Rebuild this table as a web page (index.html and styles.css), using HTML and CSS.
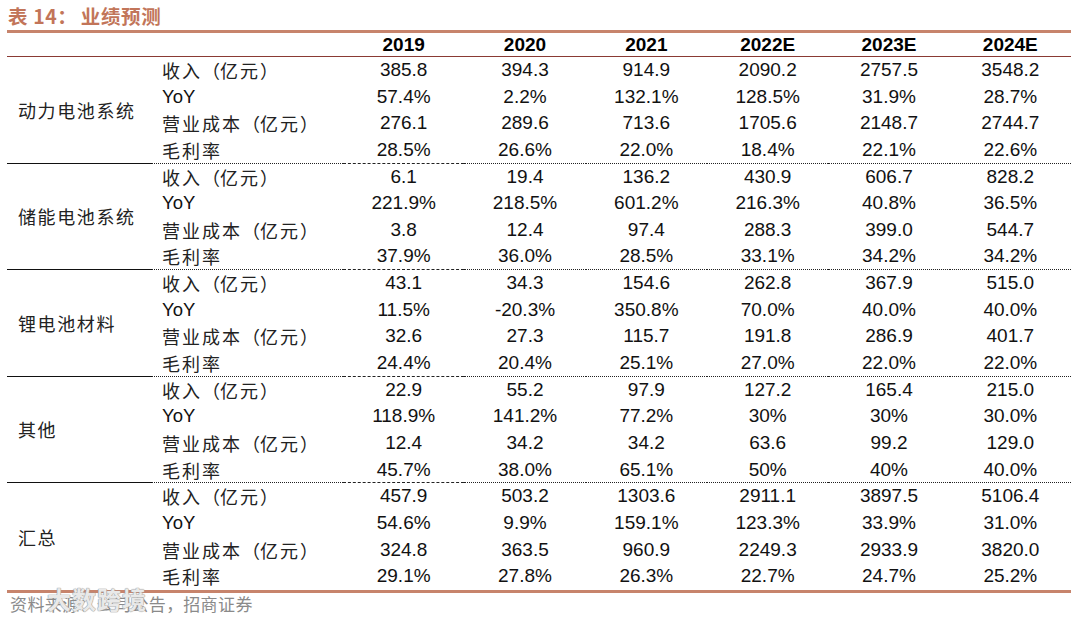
FILE: index.html
```html
<!DOCTYPE html>
<html lang="zh-CN">
<head>
<meta charset="utf-8">
<title>业绩预测</title>
<link rel="stylesheet" href="styles.css">
</head>
<body>
<div class="page">
  <div class="title">表 14<span class="pc">：</span><span class="gap"></span>业绩预测</div>
  <div class="row head">
    <div class="c"></div><div class="c"></div>
    <div class="c">2019</div><div class="c">2020</div><div class="c">2021</div>
    <div class="c">2022E</div><div class="c">2023E</div><div class="c">2024E</div>
  </div>

  <div class="group">
    <div class="gname">动力电池系统</div>
    <div class="lbl">收入<span class="po">（</span>亿元<span class="pc">）</span></div><div class="n">385.8</div><div class="n">394.3</div><div class="n">914.9</div><div class="n">2090.2</div><div class="n">2757.5</div><div class="n">3548.2</div>
    <div class="lbl en">YoY</div><div class="n">57.4%</div><div class="n">2.2%</div><div class="n">132.1%</div><div class="n">128.5%</div><div class="n">31.9%</div><div class="n">28.7%</div>
    <div class="lbl">营业成本<span class="po">（</span>亿元<span class="pc">）</span></div><div class="n">276.1</div><div class="n">289.6</div><div class="n">713.6</div><div class="n">1705.6</div><div class="n">2148.7</div><div class="n">2744.7</div>
    <div class="lbl last">毛利率</div><div class="n last s">28.5%</div><div class="n last">26.6%</div><div class="n last">22.0%</div><div class="n last">18.4%</div><div class="n last">22.1%</div><div class="n last">22.6%</div>
  </div>

  <div class="group">
    <div class="gname">储能电池系统</div>
    <div class="lbl">收入<span class="po">（</span>亿元<span class="pc">）</span></div><div class="n">6.1</div><div class="n">19.4</div><div class="n">136.2</div><div class="n">430.9</div><div class="n">606.7</div><div class="n">828.2</div>
    <div class="lbl en">YoY</div><div class="n">221.9%</div><div class="n">218.5%</div><div class="n">601.2%</div><div class="n">216.3%</div><div class="n">40.8%</div><div class="n">36.5%</div>
    <div class="lbl">营业成本<span class="po">（</span>亿元<span class="pc">）</span></div><div class="n">3.8</div><div class="n">12.4</div><div class="n">97.4</div><div class="n">288.3</div><div class="n">399.0</div><div class="n">544.7</div>
    <div class="lbl last">毛利率</div><div class="n last s">37.9%</div><div class="n last">36.0%</div><div class="n last">28.5%</div><div class="n last">33.1%</div><div class="n last">34.2%</div><div class="n last">34.2%</div>
  </div>

  <div class="group">
    <div class="gname">锂电池材料</div>
    <div class="lbl">收入<span class="po">（</span>亿元<span class="pc">）</span></div><div class="n">43.1</div><div class="n">34.3</div><div class="n">154.6</div><div class="n">262.8</div><div class="n">367.9</div><div class="n">515.0</div>
    <div class="lbl en">YoY</div><div class="n">11.5%</div><div class="n">-20.3%</div><div class="n">350.8%</div><div class="n">70.0%</div><div class="n">40.0%</div><div class="n">40.0%</div>
    <div class="lbl">营业成本<span class="po">（</span>亿元<span class="pc">）</span></div><div class="n">32.6</div><div class="n">27.3</div><div class="n">115.7</div><div class="n">191.8</div><div class="n">286.9</div><div class="n">401.7</div>
    <div class="lbl last">毛利率</div><div class="n last s">24.4%</div><div class="n last">20.4%</div><div class="n last">25.1%</div><div class="n last">27.0%</div><div class="n last">22.0%</div><div class="n last">22.0%</div>
  </div>

  <div class="group">
    <div class="gname">其他</div>
    <div class="lbl">收入<span class="po">（</span>亿元<span class="pc">）</span></div><div class="n">22.9</div><div class="n">55.2</div><div class="n">97.9</div><div class="n">127.2</div><div class="n">165.4</div><div class="n">215.0</div>
    <div class="lbl en">YoY</div><div class="n">118.9%</div><div class="n">141.2%</div><div class="n">77.2%</div><div class="n">30%</div><div class="n">30%</div><div class="n">30.0%</div>
    <div class="lbl">营业成本<span class="po">（</span>亿元<span class="pc">）</span></div><div class="n">12.4</div><div class="n">34.2</div><div class="n">34.2</div><div class="n">63.6</div><div class="n">99.2</div><div class="n">129.0</div>
    <div class="lbl last">毛利率</div><div class="n last s">45.7%</div><div class="n last">38.0%</div><div class="n last">65.1%</div><div class="n last">50%</div><div class="n last">40%</div><div class="n last">40.0%</div>
  </div>

  <div class="group final">
    <div class="gname">汇总</div>
    <div class="lbl">收入<span class="po">（</span>亿元<span class="pc">）</span></div><div class="n">457.9</div><div class="n">503.2</div><div class="n">1303.6</div><div class="n">2911.1</div><div class="n">3897.5</div><div class="n">5106.4</div>
    <div class="lbl en">YoY</div><div class="n">54.6%</div><div class="n">9.9%</div><div class="n">159.1%</div><div class="n">123.3%</div><div class="n">33.9%</div><div class="n">31.0%</div>
    <div class="lbl">营业成本<span class="po">（</span>亿元<span class="pc">）</span></div><div class="n">324.8</div><div class="n">363.5</div><div class="n">960.9</div><div class="n">2249.3</div><div class="n">2933.9</div><div class="n">3820.0</div>
    <div class="lbl">毛利率</div><div class="n">29.1%</div><div class="n">27.8%</div><div class="n">26.3%</div><div class="n">22.7%</div><div class="n">24.7%</div><div class="n">25.2%</div>
  </div>

  <div class="source">资料来源<span class="pc">：</span>公司公告<span class="pc">，</span>招商证券</div>
  <div class="watermark">大数跨境</div>
</div>
</body>
</html>
```

FILE: styles.css
```css
html, body {
  margin: 0;
  padding: 0;
  background: #ffffff;
}

.page {
  position: relative;
  width: 1064px;
  margin-left: 7px;
  font-family: "Liberation Sans", Arial, "Noto Sans CJK SC", sans-serif;
  color: #111;
}

.po,
.pc {
  display: inline-block;
  width: 1em;
}

.po {
  text-align: right;
}

.pc {
  text-align: left;
}

.title {
  box-sizing: border-box;
  height: 33px;
  line-height: 31px;
  padding-left: 1px;
  font-family: "Noto Sans CJK SC", sans-serif;
  font-weight: 700;
  font-size: 19.5px;
  letter-spacing: 0.6px;
  color: #c27559;
  border-bottom: 3px solid #c7846c;
}

.title .gap {
  display: inline-block;
  width: 4px;
}

.row.head,
.group {
  display: grid;
  grid-template-columns: 145px 191px repeat(6, 1fr);
}

.row.head {
  box-sizing: border-box;
  height: 24px;
  border-bottom: 1px solid #8a3a34;
}

.head .c {
  text-align: center;
  font-weight: 700;
  font-size: 19px;
  line-height: 23px;
  color: #000;
}

.group {
  grid-template-rows: repeat(4, 26.65px);
}

.gname {
  grid-row: 1 / span 4;
  grid-column: 1;
  box-sizing: border-box;
  display: flex;
  align-items: center;
  padding-left: 11px;
  font-family: "Noto Sans CJK SC", sans-serif;
  font-size: 18px;
  letter-spacing: 1.6px;
  color: #222;
  border-bottom: 1px solid #111;
}

.group.final .gname {
  border-bottom: none;
}

.lbl {
  box-sizing: border-box;
  padding-left: 10px;
  font-family: "Noto Sans CJK SC", sans-serif;
  font-size: 18px;
  line-height: 26px;
  letter-spacing: 2px;
  color: #222;
}

.lbl.en {
  font-family: "Liberation Sans", Arial, sans-serif;
  font-size: 18.5px;
  letter-spacing: 0;
  color: #111;
}

.n {
  box-sizing: border-box;
  text-align: center;
  font-size: 19px;
  line-height: 26px;
  color: #111;
}

.last {
  border-bottom: 1px dotted #222;
}

.n.last.s {
  border-bottom: 1px dashed #222;
}

.source {
  box-sizing: border-box;
  border-top: 3px solid #c7846c;
  height: 27px;
  line-height: 22px;
  padding-left: 3px;
  font-family: "Noto Sans CJK SC", sans-serif;
  font-size: 17px;
  letter-spacing: 0.4px;
  color: #8a8a8a;
}

.watermark {
  position: absolute;
  left: 40px;
  top: 581px;
  font-family: "Noto Sans CJK SC", sans-serif;
  font-weight: 700;
  font-size: 24px;
  letter-spacing: 1px;
  color: rgba(255, 255, 255, 0.8);
  text-shadow: 0 0 1px #9c9c9c, 0 0 1px #9c9c9c, 0 0 1px #9c9c9c;
}
```
